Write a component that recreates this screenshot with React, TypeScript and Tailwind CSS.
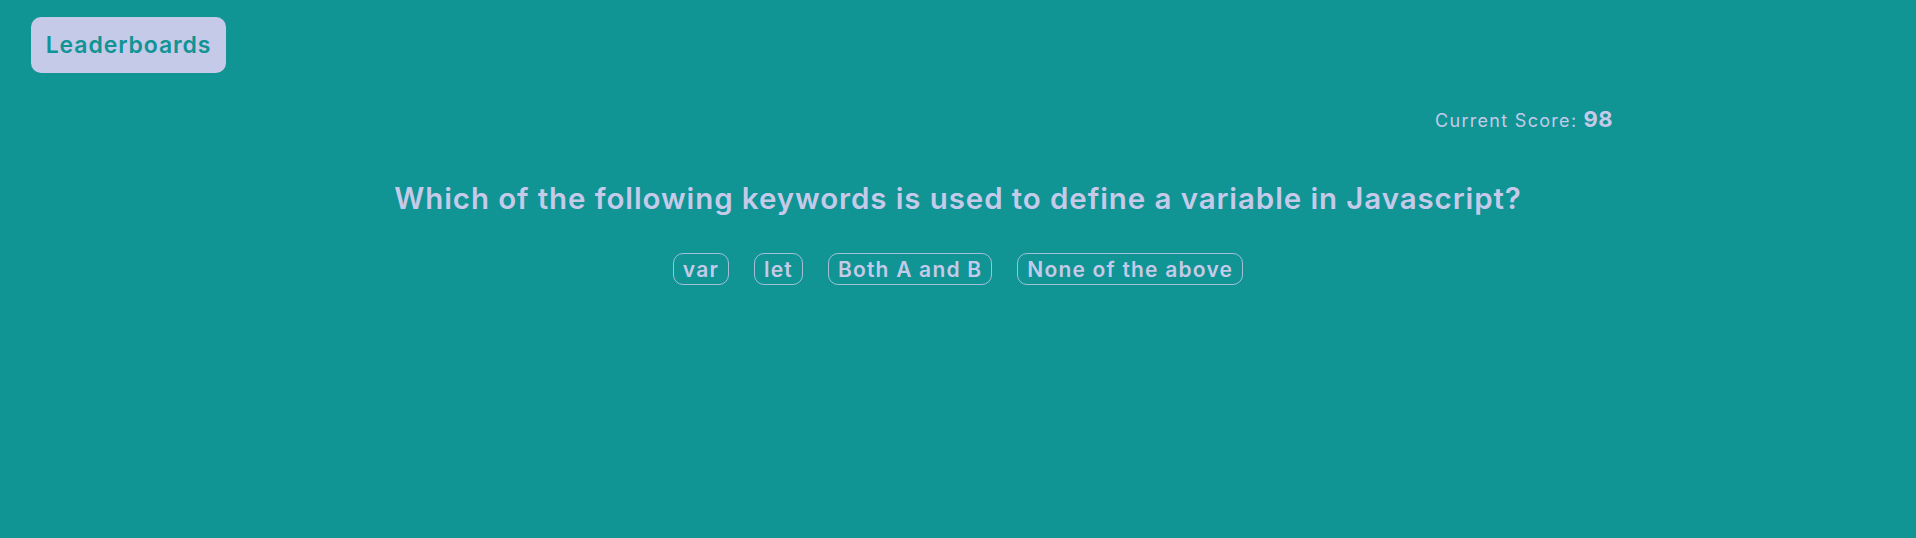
import { useState } from "react";

const OPTIONS = ["var", "let", "Both A and B", "None of the above"];

export default function App() {
  const [picked, setPicked] = useState<string | null>(null);
  const score = 98;

  return (
    <div className="min-h-[538px] w-full bg-[#109494] font-['Inter',sans-serif] text-[#c5cae9]">
      <div className="px-[31px] pt-[17px]">
        <button className="h-[56px] w-[195px] rounded-[10px] bg-[#c5cae9] text-[23px] font-semibold tracking-[0.9px] text-[#109494]">
          Leaderboards
        </button>
      </div>

      <div className="mx-auto mt-[30px] flex w-[1310px] items-baseline justify-end">
        <span className="text-[18px] tracking-[1.3px]">Current Score:</span>
        <span className="ml-[6px] text-[22px] font-bold tracking-[0.5px]">{score}</span>
      </div>

      <h1 className="mt-[44px] text-center text-[29.5px] leading-[36px] font-semibold tracking-[0.9px]">
        Which of the following keywords is used to define a variable in Javascript?
      </h1>

      {/* answers */}
      <div className="mt-[37px] flex justify-center gap-[25px]">
        {OPTIONS.map((opt) => (
          <button
            key={opt}
            onClick={() => setPicked(opt)}
            className={`h-[32px] rounded-[10px] border border-[#c5cae9]/80 px-[9px] text-[21px] font-semibold tracking-[1.2px] ${
              picked === opt ? "bg-[#c5cae9]/20" : ""
            }`}
          >
            {opt}
          </button>
        ))}
      </div>
    </div>
  );
}
